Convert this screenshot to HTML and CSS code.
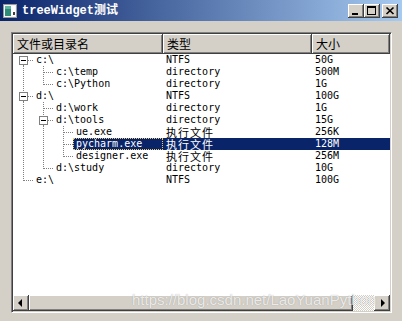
FILE: index.html
```html
<!DOCTYPE html>
<html lang="zh">
<head>
  <meta charset="UTF-8" />
  <title>treeWidget测试</title>
  <link rel="stylesheet" href="styles.css">
</head>
<body>
  <svg class="defs" width="0" height="0">
    <defs>
      <symbol id="b-v" viewBox="0 0 20 12">
        <path d="M10.5 0V12" stroke="#808080" stroke-dasharray="1 1" />
      </symbol>
      <symbol id="b-t" viewBox="0 0 20 12">
        <path d="M10.5 0V12M11 6.5H20" stroke="#808080" stroke-dasharray="1 1" />
      </symbol>
      <symbol id="b-l" viewBox="0 0 20 12">
        <path d="M10.5 0V7M11 6.5H20" stroke="#808080" stroke-dasharray="1 1" />
      </symbol>
      <symbol id="b-first" viewBox="0 0 20 12">
        <path d="M10.5 11V12M15 6.5H20" stroke="#808080" stroke-dasharray="1 1" />
        <rect x="6.5" y="2.5" width="8" height="8" fill="#fff" stroke="#808080" />
        <path d="M8 6.5H13" stroke="#000" />
      </symbol>
      <symbol id="b-mid" viewBox="0 0 20 12">
        <path d="M10.5 0V2M10.5 11V12M15 6.5H20" stroke="#808080" stroke-dasharray="1 1" />
        <rect x="6.5" y="2.5" width="8" height="8" fill="#fff" stroke="#808080" />
        <path d="M8 6.5H13" stroke="#000" />
      </symbol>
    </defs>
  </svg>

  <div class="window">
    <div class="titlebar">
      <svg class="app-icon" viewBox="0 0 14 14">
        <rect x="0.5" y="0.5" width="13" height="13" fill="#f4f4f4" stroke="#9a9a9a" />
        <rect x="2" y="2" width="6" height="10" fill="#2e8b78" />
        <rect x="2" y="2" width="6" height="3" fill="#5fb3a0" />
        <rect x="8" y="2" width="4" height="10" fill="#ffffff" />
        <rect x="10" y="8" width="2" height="3" fill="#404040" />
      </svg>
      <span class="title">treeWidget测试</span>
      <div class="caption-btns">
        <div class="cap-btn">
          <svg viewBox="0 0 16 14"><rect x="4" y="9" width="6" height="2" fill="#000" /></svg>
        </div>
        <div class="cap-btn">
          <svg viewBox="0 0 16 14"><path d="M3 2h9v9H3zM4 4v6h7V4z" fill="#000" fill-rule="evenodd" /></svg>
        </div>
        <div class="cap-btn close">
          <svg viewBox="0 0 16 14"><path d="M4.5 3.5l7 6.5M11.5 3.5l-7 6.5" stroke="#000" stroke-width="1.7" /></svg>
        </div>
      </div>
    </div>

    <div class="client">
      <div class="tree">
        <div class="header">
          <div class="hcell c-name">文件或目录名</div>
          <div class="hcell c-type">类型</div>
          <div class="hcell c-size">大小</div>
        </div>

        <div class="rows">
          <div class="row">
            <div class="name"><svg class="br"><use href="#b-first" /></svg><span class="label">c:\</span></div>
            <div class="type">NTFS</div>
            <div class="size">50G</div>
          </div>
          <div class="row">
            <div class="name"><svg class="br"><use href="#b-v" /></svg><svg class="br"><use href="#b-t" /></svg><span class="label">c:\temp</span></div>
            <div class="type">directory</div>
            <div class="size">500M</div>
          </div>
          <div class="row">
            <div class="name"><svg class="br"><use href="#b-v" /></svg><svg class="br"><use href="#b-l" /></svg><span class="label">c:\Python</span></div>
            <div class="type">directory</div>
            <div class="size">1G</div>
          </div>
          <div class="row">
            <div class="name"><svg class="br"><use href="#b-mid" /></svg><span class="label">d:\</span></div>
            <div class="type">NTFS</div>
            <div class="size">100G</div>
          </div>
          <div class="row">
            <div class="name"><svg class="br"><use href="#b-v" /></svg><svg class="br"><use href="#b-t" /></svg><span class="label">d:\work</span></div>
            <div class="type">directory</div>
            <div class="size">1G</div>
          </div>
          <div class="row">
            <div class="name"><svg class="br"><use href="#b-v" /></svg><svg class="br"><use href="#b-mid" /></svg><span class="label">d:\tools</span></div>
            <div class="type">directory</div>
            <div class="size">15G</div>
          </div>
          <div class="row">
            <div class="name"><svg class="br"><use href="#b-v" /></svg><svg class="br"><use href="#b-v" /></svg><svg class="br"><use href="#b-t" /></svg><span class="label">ue.exe</span></div>
            <div class="type zh">执行文件</div>
            <div class="size">256K</div>
          </div>
          <div class="row sel">
            <div class="name"><svg class="br"><use href="#b-v" /></svg><svg class="br"><use href="#b-v" /></svg><svg class="br"><use href="#b-t" /></svg><span class="label">pycharm.exe</span></div>
            <div class="type zh">执行文件</div>
            <div class="size">128M</div>
          </div>
          <div class="row">
            <div class="name"><svg class="br"><use href="#b-v" /></svg><svg class="br"><use href="#b-v" /></svg><svg class="br"><use href="#b-l" /></svg><span class="label">designer.exe</span></div>
            <div class="type zh">执行文件</div>
            <div class="size">256M</div>
          </div>
          <div class="row">
            <div class="name"><svg class="br"><use href="#b-v" /></svg><svg class="br"><use href="#b-l" /></svg><span class="label">d:\study</span></div>
            <div class="type">directory</div>
            <div class="size">10G</div>
          </div>
          <div class="row">
            <div class="name"><svg class="br"><use href="#b-l" /></svg><span class="label">e:\</span></div>
            <div class="type">NTFS</div>
            <div class="size">100G</div>
          </div>
        </div>

        <div class="hscroll">
          <div class="sb-btn">
            <svg viewBox="0 0 16 16"><path d="M9 4v8L5 8z" fill="#000" /></svg>
          </div>
          <div class="sb-thumb"></div>
          <div class="sb-track"></div>
          <div class="sb-btn">
            <svg viewBox="0 0 16 16"><path d="M7 4v8l4-4z" fill="#000" /></svg>
          </div>
        </div>
      </div>
    </div>

    <div class="watermark">https://blog.csdn.net/LaoYuanPython</div>
  </div>
</body>
</html>
```

FILE: styles.css
```css
* {
  margin: 0;
  padding: 0;
  box-sizing: border-box;
}
body {
  width: 402px;
  height: 321px;
  overflow: hidden;
  background-color: #d4d0c8;
  font-family: "DejaVu Sans Mono", "Noto Sans CJK SC", monospace;
  color: #000;
}
.defs {
  position: absolute;
  width: 0;
  height: 0;
}
.window {
  position: relative;
  height: 321px;
  display: flex;
  flex-direction: column;
}

/* title bar */
.titlebar {
  height: 21px;
  display: flex;
  align-items: center;
  padding: 0 4px 0 3px;
  background: linear-gradient(to right, #0a246a, #a6caf0);
}
.app-icon {
  width: 14px;
  height: 14px;
  flex: none;
}
.title {
  margin-left: 5px;
  color: #fff;
  font: bold 12px "Liberation Mono", "Noto Sans CJK SC", monospace;
  line-height: 14px;
}
.caption-btns {
  margin-left: auto;
  display: flex;
}
.cap-btn {
  width: 16px;
  height: 14px;
  background-color: #d4d0c8;
  box-shadow: inset -1px -1px #404040, inset 1px 1px #fff, inset -2px -2px #808080;
}
.cap-btn svg {
  display: block;
  width: 16px;
  height: 14px;
}
.cap-btn.close {
  margin-left: 2px;
}

/* tree widget */
.client {
  flex: 1;
  padding: 11px 10px 8px 11px;
}
.tree {
  height: 281px;
  display: flex;
  flex-direction: column;
  background-color: #fff;
  border: 1px solid;
  border-color: #808080 #fff #fff #808080;
  padding: 1px;
  box-shadow: inset 1px 1px #404040, inset -1px -1px #d4d0c8;
}
.header {
  display: flex;
  height: 20px;
  flex: none;
}
.hcell {
  background-color: #d4d0c8;
  font: 12px "Noto Sans CJK SC", sans-serif;
  line-height: 19px;
  padding-left: 4px;
  box-shadow: inset -1px -1px #404040, inset 1px 1px #fff, inset -2px -2px #808080;
  white-space: nowrap;
}
.c-name {
  width: 150px;
}
.c-type {
  width: 149px;
}
.c-size {
  flex: 1;
}
.rows {
  flex: 1;
}
.row {
  display: flex;
  height: 12px;
  font-size: 10px;
  line-height: 12px;
}
.name {
  width: 150px;
  display: flex;
  flex: none;
}
.br {
  width: 20px;
  height: 12px;
  flex: none;
  display: block;
  shape-rendering: crispEdges;
}
.label {
  flex: 1;
  padding-left: 3px;
  white-space: nowrap;
}
.type {
  width: 149px;
  flex: none;
  padding-left: 3px;
  white-space: nowrap;
}
.size {
  flex: 1;
  padding-left: 3px;
}
.zh {
  font: 11px "Noto Sans CJK SC", sans-serif;
  letter-spacing: 1px;
  line-height: 12px;
}
.row.sel .label,
.row.sel .type,
.row.sel .size {
  background-color: #0a246a;
  color: #fff;
}
.row.sel .label {
  outline: 1px dotted #f0c860;
  outline-offset: -1px;
}

/* horizontal scrollbar */
.hscroll {
  display: flex;
  height: 16px;
  flex: none;
}
.sb-btn {
  width: 16px;
  height: 16px;
  flex: none;
  background-color: #d4d0c8;
  box-shadow: inset -1px -1px #404040, inset 1px 1px #fff, inset -2px -2px #808080;
}
.sb-btn svg {
  display: block;
  width: 16px;
  height: 16px;
}
.sb-thumb {
  width: 324px;
  flex: none;
  background-color: #d4d0c8;
  box-shadow: inset -1px -1px #404040, inset 1px 1px #fff, inset -2px -2px #808080;
}
.sb-track {
  flex: 1;
  background: repeating-conic-gradient(#fff 0 25%, #d4d0c8 0 50%) 0 0 / 2px 2px;
}

.watermark {
  position: absolute;
  left: 132px;
  top: 291px;
  font: 15px "Liberation Sans", Arial, sans-serif;
  color: rgba(255, 255, 255, 0.8);
  text-shadow: 0 0 1px rgba(110, 110, 110, 0.6);
  white-space: nowrap;
}
```
